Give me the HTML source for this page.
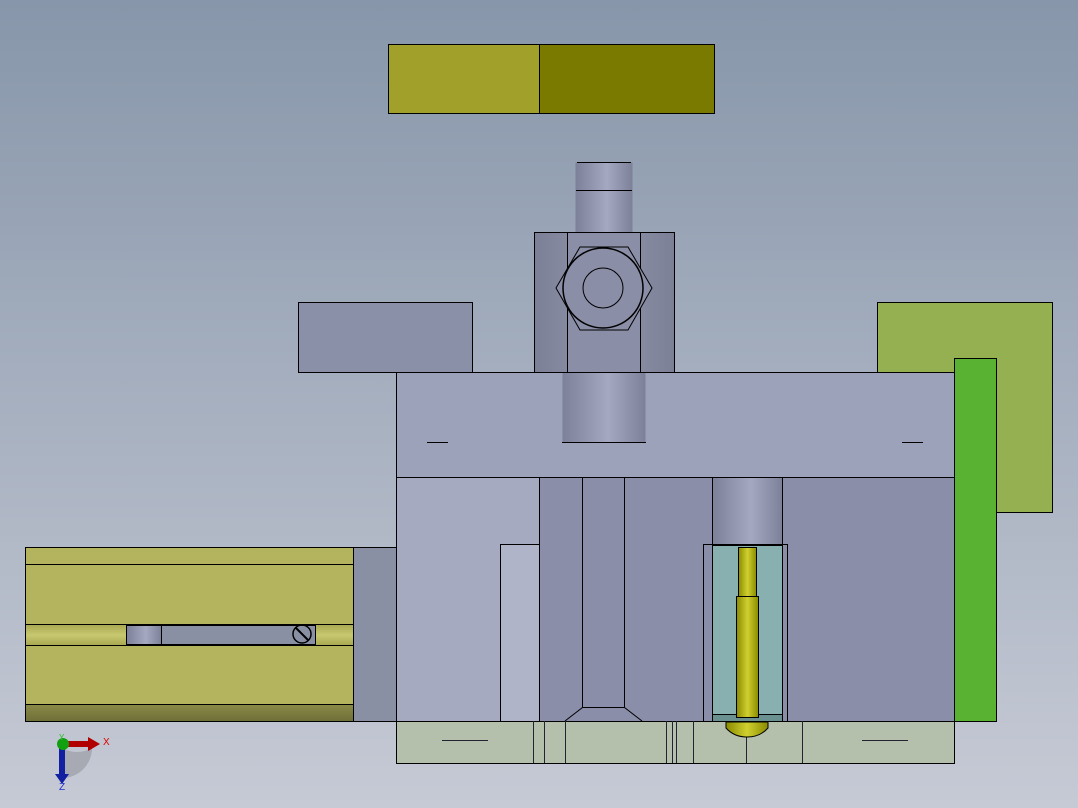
<!DOCTYPE html>
<html><head><style>html,body{margin:0;padding:0;overflow:hidden}body{width:1078px;height:808px}</style></head><body>
<svg width="1078" height="808" xmlns="http://www.w3.org/2000/svg" font-family="Liberation Sans, sans-serif">
<defs>
<linearGradient id="bg" x1="0" y1="0" x2="0" y2="1"><stop offset="0" stop-color="#8796aa"/><stop offset="1" stop-color="#c6cad5"/></linearGradient>
<linearGradient id="cyl" x1="0" y1="0" x2="1" y2="0"><stop offset="0" stop-color="#7c8098"/><stop offset=".55" stop-color="#a4a8c0"/><stop offset="1" stop-color="#7c8098"/></linearGradient>
<linearGradient id="side" x1="0" y1="0" x2="1" y2="0"><stop offset="0" stop-color="#7c8096"/><stop offset=".5" stop-color="#9296ae"/><stop offset="1" stop-color="#7c8096"/></linearGradient>
<linearGradient id="bolt" x1="0" y1="0" x2="1" y2="0"><stop offset="0" stop-color="#8a8a00"/><stop offset=".5" stop-color="#d0d030"/><stop offset="1" stop-color="#8a8a00"/></linearGradient>
<linearGradient id="slot" x1="0" y1="0" x2="0" y2="1"><stop offset="0" stop-color="#a8a850"/><stop offset=".5" stop-color="#c8c870"/><stop offset="1" stop-color="#a8a850"/></linearGradient>
<linearGradient id="band" x1="0" y1="0" x2="0" y2="1"><stop offset="0" stop-color="#8a8a48"/><stop offset="1" stop-color="#6e6e38"/></linearGradient>
</defs>
<rect width="1078" height="808" fill="url(#bg)"/>
<g stroke="#000" stroke-width="1">
<rect x="388.5" y="44.5" width="151" height="69" fill="#a0a02a"/>
<rect x="539.5" y="44.5" width="175" height="69" fill="#7a7a00"/>
<rect x="575.5" y="162.5" width="57" height="70" fill="url(#cyl)" stroke="none"/>
<line x1="577" y1="162.5" x2="631" y2="162.5"/><line x1="576" y1="190.5" x2="632" y2="190.5"/>
<rect x="534.5" y="232.5" width="140" height="140" fill="url(#side)"/>
<rect x="567.5" y="232.5" width="73" height="140" fill="#8a8ea6"/>
<polygon points="556,288 580,247 628,247 652,288 628,330 580,330" fill="#8a8ea6"/>
<circle cx="603" cy="288" r="40" fill="#8a8ea6" stroke-width="1.5"/>
<circle cx="603" cy="288" r="20" fill="none"/>
<rect x="298.5" y="302.5" width="174" height="70" fill="#8a90a8"/>
<rect x="877.5" y="302.5" width="175" height="210" fill="#94b050"/>
<rect x="396.5" y="372.5" width="558" height="105" fill="#9ca2ba"/>
<rect x="562.5" y="372.5" width="83" height="70" fill="url(#cyl)" stroke="none"/>
<line x1="562" y1="442.5" x2="646" y2="442.5"/>
<line x1="396" y1="372.5" x2="955" y2="372.5"/>
<line x1="427" y1="442.5" x2="448" y2="442.5"/><line x1="902" y1="442.5" x2="923" y2="442.5"/>
<rect x="396.5" y="477.5" width="143" height="244" fill="#a6aac0"/>
<rect x="500.5" y="544.5" width="39" height="177" fill="#b0b4c8"/>
<rect x="539.5" y="477.5" width="415" height="244" fill="#8a8ea8"/>
<line x1="582.5" y1="477" x2="582.5" y2="707"/><line x1="624.5" y1="477" x2="624.5" y2="707"/>
<polyline points="565,721 582.5,707.5 624.5,707.5 642,721" fill="none"/>
<rect x="712.5" y="477.5" width="70" height="68" fill="url(#cyl)"/>
<rect x="703.5" y="544.5" width="84" height="177" fill="#8a8ea8"/>
<rect x="712.5" y="545.5" width="70" height="176" fill="#88b0b0"/>
<rect x="712.5" y="714.5" width="70" height="7" fill="#6a9090"/>
<rect x="738.5" y="547.5" width="18" height="50" fill="url(#bolt)"/>
<rect x="736.5" y="596.5" width="22" height="121" fill="url(#bolt)"/>
<rect x="954.5" y="358.5" width="42" height="363" fill="#5ab232"/>
<rect x="396.5" y="721.5" width="558" height="42" fill="#b4bfac"/>
<g stroke="#223">
<line x1="533.5" y1="721" x2="533.5" y2="763"/><line x1="544.5" y1="721" x2="544.5" y2="763"/><line x1="565.5" y1="721" x2="565.5" y2="763"/>
<line x1="666.5" y1="721" x2="666.5" y2="763"/><line x1="672.5" y1="721" x2="672.5" y2="763"/><line x1="676.5" y1="721" x2="676.5" y2="763"/><line x1="693.5" y1="721" x2="693.5" y2="763"/>
<line x1="746.5" y1="735" x2="746.5" y2="763"/><line x1="802.5" y1="721" x2="802.5" y2="763"/>
<line x1="442" y1="740.5" x2="488" y2="740.5"/><line x1="862" y1="740.5" x2="908" y2="740.5"/>
</g>
<path d="M726,722 H768 V728 Q760,737 747,737 Q734,737 726,728 Z" fill="url(#bolt)"/>
<rect x="25.5" y="547.5" width="328" height="174" fill="#b4b45e"/>
<rect x="25.5" y="624.5" width="328" height="21" fill="url(#slot)"/>
<rect x="25.5" y="704.5" width="328" height="17" fill="url(#band)"/>
<line x1="25" y1="564.5" x2="354" y2="564.5"/>
<rect x="126.5" y="625.5" width="35" height="19" fill="url(#cyl)"/>
<rect x="161.5" y="625.5" width="154" height="19" fill="#8a90a4"/>
<circle cx="302" cy="634" r="9" fill="none" stroke-width="1.5"/>
<line x1="296" y1="628" x2="308" y2="640" stroke-width="2"/>
<rect x="353.5" y="547.5" width="43" height="174" fill="#8a90a4"/>
</g>
<g>
<path d="M62,748 A30,30 0 0 0 92,748 A30,30 0 0 1 62,778 Z" fill="#8c8c94" opacity=".5"/>
<rect x="63" y="741" width="26" height="6" fill="#b00000"/><polygon points="88,737 100,744 88,751" fill="#b00000"/>
<rect x="59" y="745" width="6" height="30" fill="#1020a0"/><polygon points="55,774 69,774 62,784" fill="#1020a0"/>
<circle cx="63" cy="744" r="6" fill="#10a010"/>
<text x="103" y="745" font-size="10" fill="#e00000">X</text>
<text x="59" y="790" font-size="10" fill="#2030d0">Z</text>
<text x="59" y="740" font-size="8" fill="#20c020">Y</text>
</g>
</svg>
</body></html>
